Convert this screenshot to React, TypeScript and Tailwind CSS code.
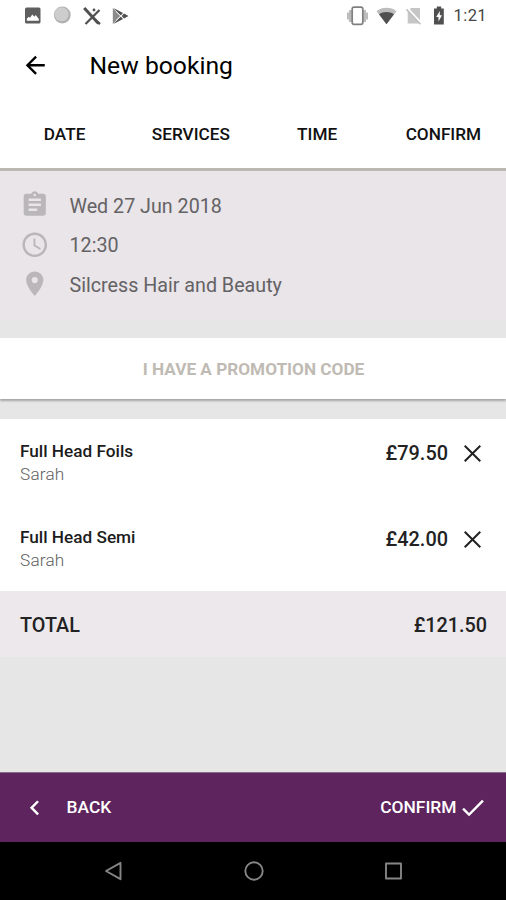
import React, { useState } from 'react';
import {
  MdAccessTime,
  MdArrowBack,
  MdAssignment,
  MdCheck,
  MdChevronLeft,
  MdPlace,
} from 'react-icons/md';

interface Service {
  id: number;
  name: string;
  stylist: string;
  price: number;
}

const TABS = ['DATE', 'SERVICES', 'TIME', 'CONFIRM'];

const SERVICES: Service[] = [
  { id: 1, name: 'Full Head Foils', stylist: 'Sarah', price: 79.5 },
  { id: 2, name: 'Full Head Semi', stylist: 'Sarah', price: 42 },
];

const DETAILS = [
  { icon: MdAssignment, text: 'Wed 27 Jun 2018' },
  { icon: MdAccessTime, text: '12:30' },
  { icon: MdPlace, text: 'Silcress Hair and Beauty' },
];

const formatPrice = (value: number) => `£${value.toFixed(2)}`;

function StatusBar() {
  return (
    <div className="flex h-8 shrink-0 items-center justify-between pb-px pl-6 pr-[19px]">
      <div className="flex items-center">
        {/* gallery */}
        <svg width="18" height="18" viewBox="0 0 18 18">
          <rect x="1" y="0.5" width="15.5" height="16" rx="1.5" fill="#5f5f5f" />
          <path d="M2.8 13.8v-2l2-2 1.2 1L8.3 7.5l2 2.3 1.5-1.8 3 4v1.8z" fill="#fff" />
        </svg>
        {/* app notification */}
        <svg className="ml-[11px]" width="19" height="19" viewBox="0 0 19 19">
          <circle cx="9.3" cy="9" r="8.4" fill="#b0b0b0" />
          <circle cx="8.6" cy="8.2" r="7" fill="#cdcdcd" />
        </svg>
        {/* crossed tools */}
        <svg className="ml-[11px]" width="19" height="20" viewBox="0 0 19 20" fill="none" stroke="#505050">
          <path d="M1.2 2L15.5 17.5" strokeWidth="3" />
          <path d="M2.5 18L9.5 11 16.5 4" strokeWidth="2.2" />
          <circle cx="11" cy="4" r="1.4" fill="#505050" stroke="none" />
          <path d="M12.5 14.5l4.5 3.5" strokeWidth="2.4" />
        </svg>
        {/* play store */}
        <svg className="ml-[9px]" width="18" height="18" viewBox="0 0 18 18">
          <path d="M1.8 1v16L9.5 9z" fill="#8a8a8a" />
          <path d="M2.4 1L12 6 9.6 8.4zM2.4 17L12 12 9.6 9.6zM13 6.6L17.5 9 13 11.4 10.6 9z" fill="#505050" />
          <path d="M5 4.5L9.8 9 5 13.5" fill="none" stroke="#fff" strokeWidth="0.9" />
        </svg>
      </div>
      <div className="flex items-center">
        {/* vibrate */}
        <svg width="23" height="20" viewBox="0 0 23 20">
          <path d="M1 6.5h2V4h3v12H3v-2.500H1zM22 6.500h-2V4h-3v12h3v-2.500h2z" fill="#bcbcbc" />
          <rect x="6.200" y="1.200" width="10.600" height="17.200" rx="1.800" fill="#fff" stroke="#808080" strokeWidth="1.700" />
        </svg>
        {/* wifi */}
        <svg className="ml-[7px]" width="21" height="18" viewBox="0 0 21 18">
          <path d="M.5 4.200C6-.3 15-.3 20.500 4.200L10.500 17.200z" fill="#bdbdbd" />
          <path d="M3 7.200C7 4.300 14 4.300 18 7.200L10.500 17.200z" fill="#505050" />
        </svg>
        {/* no sim */}
        <svg className="ml-[9px]" width="17" height="18" viewBox="0 0 17 18">
          <path d="M5 1h9v15.500H1.700V4.300z" fill="#c6c6c6" />
          <path d="M1 1L16 17" stroke="#fff" strokeWidth="2.400" />
          <path d="M.5 2.300L14.500 17.300" stroke="#c0c0c0" strokeWidth="1.600" />
        </svg>
        {/* battery */}
        <svg className="ml-2.5" width="12" height="19" viewBox="0 0 12 19">
          <path d="M3.800.500h4.400v2H10.800v16H1V2.500h2.800z" fill="#505050" />
          <path d="M6.800 5L3.200 11h2.300v4.500L9 9.300H6.800z" fill="#fff" />
        </svg>
        <span className="relative top-px ml-[9px] text-[16.5px] leading-none tracking-[0.4px] text-[#454545]">1:21</span>
      </div>
    </div>
  );
}

function Header() {
  return (
    <div className="flex h-[67px] shrink-0 items-center pl-[21px]">
      <button aria-label="Go back" className="pb-px text-black">
        <MdArrowBack size={28.5} />
      </button>
      <h1 className="ml-10 pt-0.5 text-[24.7px] font-normal leading-none text-black">New booking</h1>
    </div>
  );
}

function Tabs() {
  return (
    <div className="flex h-[72px] shrink-0 border-b-[3px] border-[#bcb8b2] pl-px">
      {TABS.map((tab) => (
        <button key={tab} className="flex-1 pl-px pt-0.5 text-[17.2px] font-medium text-[#111]">
          {tab}
        </button>
      ))}
    </div>
  );
}

function BookingDetails() {
  return (
    <div className="flex h-[149px] shrink-0 flex-col bg-[#e9e5e9] pt-3.5">
      {DETAILS.map(({ icon: Icon, text }) => (
        <div key={text} className="flex h-[39.5px] items-center pl-5">
          <Icon size={29.5} className="text-[#b9b7b9]" />
          <span className="ml-5 pt-1 text-[19.7px] font-normal leading-none text-[#646264]">{text}</span>
        </div>
      ))}
    </div>
  );
}

function ServiceRow({ service, onRemove }: { service: Service; onRemove: (id: number) => void }) {
  return (
    <div className="flex h-[86px] items-start justify-between pl-5 pr-[25px] pt-[21px]">
      <div>
        <p className="text-[17.2px] font-medium leading-[23px] text-[#1c1c1c]">{service.name}</p>
        <p className="text-[17.2px] font-light leading-[23px] tracking-[0.2px] text-[#606060]">{service.stylist}</p>
      </div>
      <div className="flex items-center pt-px">
        <span className="pt-px text-[19.9px] font-medium leading-6 text-[#222]">{formatPrice(service.price)}</span>
        <button aria-label="Remove" className="ml-4" onClick={() => onRemove(service.id)}>
          <svg width="17" height="17" viewBox="0 0 17 17" stroke="#222" strokeWidth="2">
            <path d="M.7.7l15.600 15.600M16.300.7L.7 16.300" />
          </svg>
        </button>
      </div>
    </div>
  );
}

function ActionBar() {
  return (
    <div className="flex h-[70px] shrink-0 items-center justify-between border-t border-[#8a6a8a] bg-[#5e245e] pl-5 pr-[19px] text-[17.4px] font-medium text-white">
      <button className="flex items-center">
        <MdChevronLeft size={29.5} />
        <span className="ml-[17px]">BACK</span>
      </button>
      <button className="flex items-center">
        <span>CONFIRM</span>
        <MdCheck size={29.5} className="ml-px" />
      </button>
    </div>
  );
}

function NavigationBar() {
  return (
    <div className="flex h-[58px] shrink-0 items-center justify-center gap-[120px] bg-black pl-px">
      <svg width="20" height="20" viewBox="0 0 20 20" fill="none" stroke="#858585" strokeWidth="1.9" strokeLinejoin="round">
        <path d="M2 10L16.500 1.800v16.400z" />
      </svg>
      <svg width="20" height="20" viewBox="0 0 20 20" fill="none" stroke="#858585" strokeWidth="1.9">
        <circle cx="10" cy="10" r="8.7" />
      </svg>
      <svg width="20" height="20" viewBox="0 0 20 20" fill="none" stroke="#858585" strokeWidth="1.9" strokeLinejoin="round">
        <rect x="2" y="2.500" width="15" height="15" />
      </svg>
    </div>
  );
}

export default function App() {
  const [services, setServices] = useState<Service[]>(SERVICES);
  const total = services.reduce((sum, s) => sum + s.price, 0);

  const removeService = (id: number) => setServices(services.filter((s) => s.id !== id));

  return (
    <div className="flex h-[900px] w-[506px] flex-col overflow-hidden bg-white font-['Roboto',sans-serif]">
      <StatusBar />
      <Header />
      <Tabs />
      <div className="flex flex-1 flex-col bg-[#e6e6e6]">
        <BookingDetails />
        <button className="mt-[18px] h-[61px] shrink-0 bg-white pl-px pt-0.5 text-[17.2px] font-bold text-[#bfbbb4] shadow-[0_2px_2px_#a5a5a5]">
          I HAVE A PROMOTION CODE
        </button>
        <div className="mt-5 bg-white">
          {services.map((service) => (
            <ServiceRow key={service.id} service={service} onRemove={removeService} />
          ))}
        </div>
        <div className="flex h-[66px] items-center justify-between bg-[#ede8ec] pl-5 pr-[19px] pt-[3px] text-[19.8px] font-medium text-[#222]">
          <span>TOTAL</span>
          <span>{formatPrice(total)}</span>
        </div>
      </div>
      <ActionBar />
      <NavigationBar />
    </div>
  );
}
